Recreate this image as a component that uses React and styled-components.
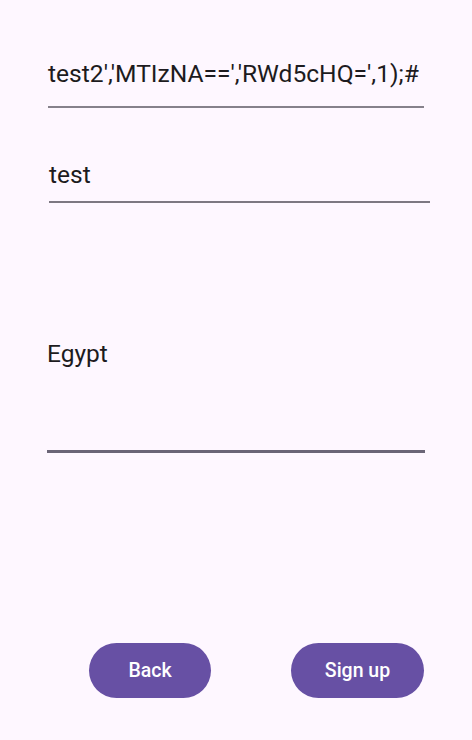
import styled, { createGlobalStyle } from "styled-components";

const GlobalStyle = createGlobalStyle`
  html, body {
    margin: 0;
    padding: 0;
    background: #fef7ff;
  }
  body {
    font-family: Roboto, "Noto Sans", sans-serif;
    color: #1d1b20;
  }
`;

const Page = styled.div`
  box-sizing: border-box;
  width: 472px;
  min-height: 740px;
  display: flex;
  flex-direction: column;
  background: #fef7ff;
`;

const Field = styled.div`
  box-sizing: border-box;
  margin: ${(p) => p.$margin};
  padding: ${(p) => p.$padding};
  border-bottom: ${(p) => p.$line};
  font-size: ${(p) => p.$size || 24.5}px;
  line-height: 28px;
  white-space: nowrap;
`;

const ButtonRow = styled.div`
  display: flex;
  justify-content: space-between;
  margin: 190px 48px 0 89px;
`;

const PillButton = styled.button`
  height: 55px;
  width: ${(p) => p.$width}px;
  border: none;
  border-radius: 28px;
  background: #6750a4;
  color: #ffffff;
  font-family: Roboto, sans-serif;
  font-weight: 500;
  font-size: 19.5px;
  padding: 0;
`;

export default function App() {
  return (
    <Page>
      <GlobalStyle />
      <Field
        $size={24.6}
        $margin="60px 48px 0 48px"
        $padding="0 0 18px 0"
        $line="2px solid #86818b"
      >
        test2','MTIzNA==','RWd5cHQ=',1);#
      </Field>
      <Field
        $margin="53px 42px 0 49px"
        $padding="0 0 12px 0"
        $line="2px solid #7d7882"
      >
        test
      </Field>
      <Field
        $margin="137px 47px 0 47px"
        $padding="0 0 82px 0"
        $line="3px solid #6b6577"
      >
        Egypt
      </Field>
      <ButtonRow>
        <PillButton $width={122}>Back</PillButton>
        <PillButton $width={133}>Sign up</PillButton>
      </ButtonRow>
    </Page>
  );
}
